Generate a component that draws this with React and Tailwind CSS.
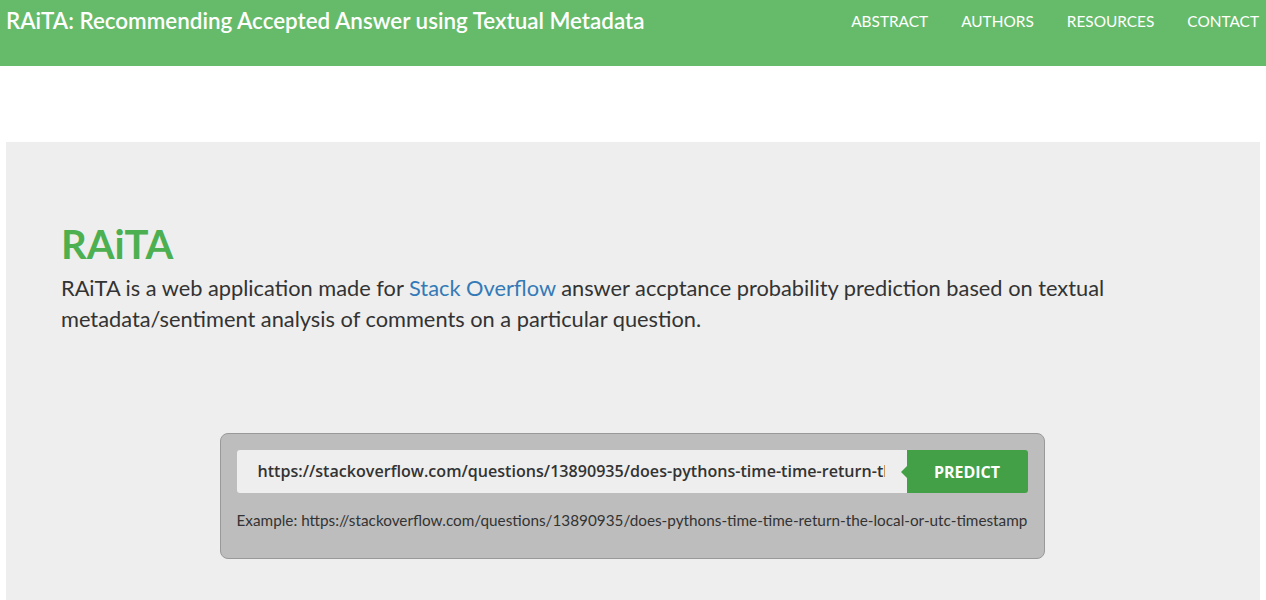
export default function App() {
  const url =
    "https://stackoverflow.com/questions/13890935/does-pythons-time-time-return-the-local-or-utc-timestamp";

  return (
    <div className="min-h-screen bg-white font-['Lato','Noto_Sans',sans-serif]">
      <header className="flex h-[66px] items-start justify-between bg-[#66bb6a] pl-[6px] pr-[7px] pt-[7px] text-white">
        <h1 className="text-[22.4px] font-semibold leading-[28px]">
          RAiTA: Recommending Accepted Answer using Textual Metadata
        </h1>
        <nav className="flex gap-[33px] pt-[4px] text-[15.4px] leading-[20px]">
          <a href="#abstract">ABSTRACT</a>
          <a href="#authors">AUTHORS</a>
          <a href="#resources">RESOURCES</a>
          <a href="#contact">CONTACT</a>
        </nav>
      </header>

      <main className="mx-[6px] mt-[76px] h-[460px] bg-[#eeeeee] px-[55px] pt-[78px]">
        <h2 className="text-[40px] font-bold leading-[48px] text-[#4caf50]">RAiTA</h2>
        <p className="mt-[4px] max-w-[1080px] text-[21.8px] leading-[31px] text-[#333333]">
          RAiTA is a web application made for{" "}
          <a href="#so" className="text-[#337ab7]">
            Stack Overflow
          </a>{" "}
          answer accptance probability prediction based on textual metadata/sentiment analysis of
          comments on a particular question.
        </p>

        <div className="mt-[99px] flex justify-center pr-[2px]">
          <div className="w-[825px] rounded-[8px] border border-[#999999] bg-[#bdbdbd] px-[16px] pb-[29px] pt-[16px]">
            <div className="flex h-[43px]">
              <div className="flex min-w-0 flex-1 items-center overflow-hidden rounded-l-[3px] bg-[#eeeeee] pl-[21px] pr-[22px]">
                <span className="overflow-hidden whitespace-nowrap font-['Open_Sans',sans-serif] text-[16.1px] font-semibold text-[#333333]">
                  {url}
                </span>
              </div>
              <button className="relative w-[121px] rounded-r-[3px] bg-[#43a047] font-['Open_Sans',sans-serif] text-[16px] font-bold text-white">
                <span className="absolute left-[-6px] top-1/2 h-0 w-0 -translate-y-1/2 border-y-[6px] border-r-[6px] border-y-transparent border-r-[#43a047]" />
                PREDICT
              </button>
            </div>
            <p className="mt-[18px] text-[15.3px] leading-[18px] text-[#333333]">Example: {url}</p>
          </div>
        </div>
      </main>
    </div>
  );
}
